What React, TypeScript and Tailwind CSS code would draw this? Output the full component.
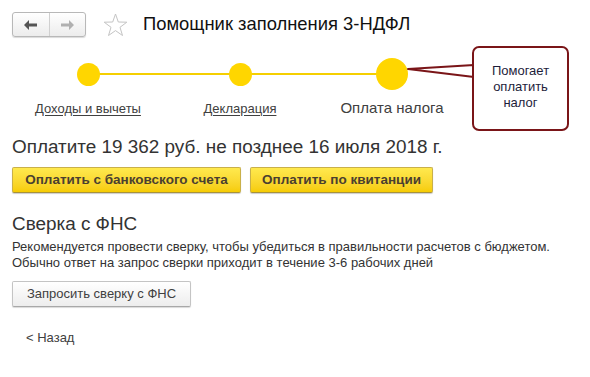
import React from "react";

function StepLabel({ text, active }: { text: string; active?: boolean }) {
  return active ? (
    <span className="text-[15px] text-[#404040]">{text}</span>
  ) : (
    <span className="text-[13px] text-[#404040] underline underline-offset-2 decoration-[#404040]">{text}</span>
  );
}

export default function App() {
  return (
    <div
      className="relative w-[590px] h-[377px] bg-white text-[#333] overflow-hidden"
      style={{ fontFamily: '"Liberation Sans", Arial, sans-serif' }}
    >
      <div className="flex flex-col pl-[12px] pt-[12px]">
        {/* header */}
        <div className="flex items-center h-[25px]">
          <div className="flex h-[25px] w-[74px] rounded-[3px] border border-[#b8b8b8] bg-gradient-to-b from-white to-[#ececec] shadow-[0_1px_1px_rgba(0,0,0,0.15)]">
            <div className="flex-1 flex items-center justify-center border-r border-[#d0d0d0]">
              <svg width="14" height="10" viewBox="0 0 14 10">
                <path d="M0 5 L5 0 L5 3.5 L13 3.5 L13 6.5 L5 6.5 L5 10 Z" fill="#555" />
              </svg>
            </div>
            <div className="flex-1 flex items-center justify-center">
              <svg width="14" height="10" viewBox="0 0 14 10">
                <path d="M14 5 L9 0 L9 3.5 L1 3.5 L1 6.5 L9 6.5 L9 10 Z" fill="#b0b0b0" />
              </svg>
            </div>
          </div>
          <svg className="ml-[17px]" width="25" height="24" viewBox="0 0 25 24">
            <path
              d="M12.5 1 L15.3 9 L23.8 9.2 L17 14.3 L19.5 22.5 L12.5 17.6 L5.5 22.5 L8 14.3 L1.2 9.2 L9.7 9 Z"
              fill="white"
              stroke="#c4c4c4"
              strokeWidth="1"
            />
          </svg>
          <div className="ml-[15px] text-[18.4px] text-[#111] leading-none">Помощник заполнения 3-НДФЛ</div>
        </div>

        {/* progress */}
        <div className="relative mt-[21px] w-[456px]">
          <div className="absolute left-[76px] right-[76px] top-[15px] h-[2px] bg-[#f5cf00]" />
          <div className="relative grid grid-cols-3 h-[32px] items-center">
            <div className="flex justify-center">
              <div className="w-[23px] h-[23px] rounded-full bg-[#ffd600]" />
            </div>
            <div className="flex justify-center">
              <div className="w-[23px] h-[23px] rounded-full bg-[#ffd600]" />
            </div>
            <div className="flex justify-center">
              <div className="w-[32px] h-[32px] rounded-full bg-[#ffd600]" />
            </div>
          </div>
          <div className="grid grid-cols-3 mt-[9px] items-baseline leading-[18px]">
            <div className="text-center"><StepLabel text="Доходы и вычеты" /></div>
            <div className="text-center"><StepLabel text="Декларация" /></div>
            <div className="text-center"><StepLabel text="Оплата налога" active /></div>
          </div>
        </div>

        <div className="mt-[19px] text-[18.9px] leading-[20px] text-[#333]">
          Оплатите 19 362 руб. не позднее 16 июля 2018 г.
        </div>

        <div className="flex gap-[9px] mt-[10px]">
          <button className="h-[26px] w-[229px] rounded-[2px] border border-[#c9b04a] border-b-[#a8923a] bg-gradient-to-b from-[#ffe94d] to-[#f6cc00] text-[13.5px] font-bold text-[#4a4030] shadow-[0_1px_1px_rgba(0,0,0,0.2)]">
            Оплатить с банковского счета
          </button>
          <button className="h-[26px] w-[183px] rounded-[2px] border border-[#c9b04a] border-b-[#a8923a] bg-gradient-to-b from-[#ffe94d] to-[#f6cc00] text-[13.5px] font-bold text-[#4a4030] shadow-[0_1px_1px_rgba(0,0,0,0.2)]">
            Оплатить по квитанции
          </button>
        </div>

        <div className="mt-[21px] text-[18.9px] leading-[20px] text-[#333]">Сверка с ФНС</div>
        <div className="mt-[5px] text-[13px] leading-[16px] text-[#333]">
          <div>Рекомендуется провести сверку, чтобы убедиться в правильности расчетов с бюджетом.</div>
          <div>Обычно ответ на запрос сверки приходит в течение 3-6 рабочих дней</div>
        </div>

        <div className="mt-[10px]">
          <button className="h-[26px] w-[179px] rounded-[2px] border border-[#c4c4c4] border-b-[#a8a8a8] bg-gradient-to-b from-white to-[#ededed] text-[13px] text-[#404040] shadow-[0_1px_1px_rgba(0,0,0,0.15)]">
            Запросить сверку с ФНС
          </button>
        </div>

        <div className="mt-[23px] ml-[14px] text-[13px] leading-[16px] text-[#404040]">&lt; Назад</div>
      </div>

      {/* callout annotation */}
      <svg className="absolute left-[400px] top-[55px]" width="80" height="30" viewBox="0 0 80 30">
        <path d="M8 14 L74 10 L74 22 Z" fill="white" stroke="#7a1518" strokeWidth="2" strokeLinejoin="round" />
      </svg>
      <div className="absolute left-[472px] top-[46px] w-[97px] h-[85px] rounded-[7px] border-2 border-[#7a1518] bg-white flex items-center justify-center">
        <div className="text-center text-[13px] leading-[16px] text-[#1d1d3a] pb-[4px]">
          Помогает
          <br />
          оплатить
          <br />
          налог
        </div>
      </div>
    </div>
  );
}
